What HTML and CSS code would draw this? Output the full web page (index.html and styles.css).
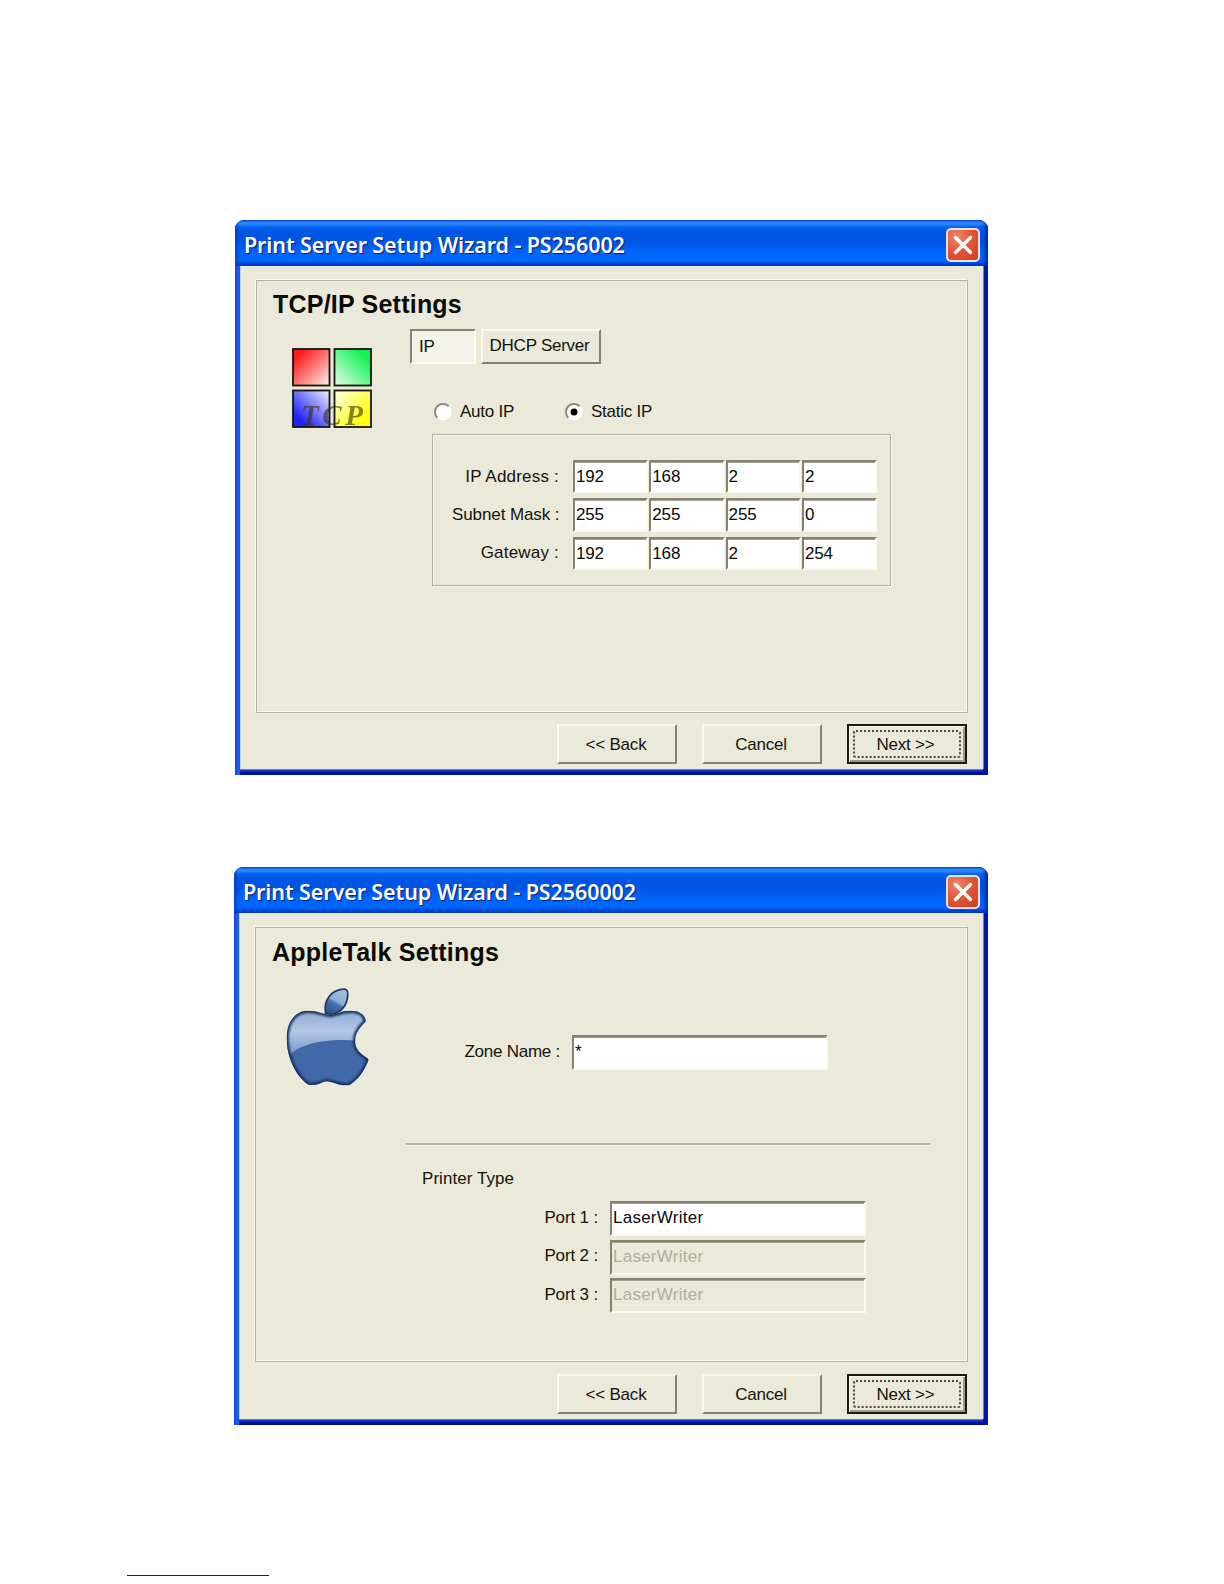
FILE: index.html
```
<!DOCTYPE html>
<html lang="en">

<head>
  <meta charset="UTF-8" />
  <meta name="viewport" content="width=device-width, initial-scale=1.0" />
  <title>Print Server Setup Wizard</title>
  <link rel="stylesheet" href="styles.css">
</head>

<body>
  <div class="window tcp-window">
    <div class="titlebar">
      <span class="title">Print Server Setup Wizard - PS256002</span>
      <div class="close">
        <svg width="20" height="20" viewBox="0 0 20 20"><path d="M2.500 2.500L17.500 17.500M17.500 2.500L2.500 17.500" stroke="#fff" stroke-width="3.400" stroke-linecap="round" /></svg>
      </div>
    </div>
    <div class="content">
      <div class="panel">
        <h2>TCP/IP Settings</h2>
        <div class="columns">
          <svg class="tcp-icon" width="80" height="80" viewBox="0 0 80 80">
            <defs>
              <linearGradient id="red" x1="0" y1="0" x2="1" y2="1"><stop offset=".15" stop-color="#ff1a1a" /><stop offset="1" stop-color="#fff0ec" /></linearGradient>
              <linearGradient id="green" x1="1" y1="0" x2="0" y2="1"><stop offset=".15" stop-color="#0cf050" /><stop offset="1" stop-color="#e4ffe8" /></linearGradient>
              <linearGradient id="blue" x1="0" y1="1" x2="1" y2="0"><stop offset=".2" stop-color="#2222fa" /><stop offset="1" stop-color="#f0f0ff" /></linearGradient>
              <linearGradient id="yellow" x1="1" y1="1" x2="0" y2="0"><stop offset=".25" stop-color="#ffff10" /><stop offset="1" stop-color="#fffff0" /></linearGradient>
            </defs>
            <g stroke="#16160e" stroke-width="1.800">
              <rect x="1" y="1" width="36.500" height="36.500" fill="url(#red)" />
              <rect x="42.500" y="1" width="36.500" height="36.500" fill="url(#green)" />
              <rect x="1" y="42.500" width="36.500" height="36.500" fill="url(#blue)" />
              <rect x="42.500" y="42.500" width="36.500" height="36.500" fill="url(#yellow)" />
            </g>
            <text class="tcp-text" x="9" y="77" textLength="62">TCP</text>
          </svg>
          <div class="settings">
            <div class="tabs">
              <div class="tab active">IP</div>
              <div class="tab">DHCP Server</div>
            </div>
            <div class="radios">
              <div class="radio">
                <svg width="18" height="18" viewBox="0 0 18 18"><circle cx="9" cy="9" r="8.500" fill="#fff" /><path d="M3.300 14.700A8 8 0 0 1 14.700 3.300" fill="none" stroke="#8d8b7e" stroke-width="2" /></svg>
                <span>Auto IP</span>
              </div>
              <div class="radio">
                <svg width="18" height="18" viewBox="0 0 18 18"><circle cx="9" cy="9" r="8.500" fill="#fff" /><path d="M3.300 14.700A8 8 0 0 1 14.700 3.300" fill="none" stroke="#8d8b7e" stroke-width="2" /><circle cx="9" cy="9" r="3.500" fill="#000" /></svg>
                <span>Static IP</span>
              </div>
            </div>
            <div class="ip-box">
              <div class="row">
                <span class="label">IP Address :</span>
                <div class="field">192</div><div class="field">168</div><div class="field">2</div><div class="field">2</div>
              </div>
              <div class="row">
                <span class="label subnet">Subnet Mask :</span>
                <div class="field">255</div><div class="field">255</div><div class="field">255</div><div class="field">0</div>
              </div>
              <div class="row">
                <span class="label">Gateway :</span>
                <div class="field">192</div><div class="field">168</div><div class="field">2</div><div class="field">254</div>
              </div>
            </div>
          </div>
        </div>
      </div>
      <div class="buttons">
        <div class="btn">&lt;&lt; Back</div>
        <div class="btn">Cancel</div>
        <div class="btn default"><span>Next &gt;&gt;</span></div>
      </div>
    </div>
  </div>

  <div class="window apple-window">
    <div class="titlebar">
      <span class="title">Print Server Setup Wizard - PS2560002</span>
      <div class="close">
        <svg width="20" height="20" viewBox="0 0 20 20"><path d="M2.500 2.500L17.500 17.500M17.500 2.500L2.500 17.500" stroke="#fff" stroke-width="3.400" stroke-linecap="round" /></svg>
      </div>
    </div>
    <div class="content">
      <div class="panel">
        <h2>AppleTalk Settings</h2>
        <div class="columns">
          <svg class="apple-icon" width="83" height="98" viewBox="0 0 250 294">
            <defs>
              <linearGradient id="body" x1="0" y1="0" x2="0" y2="1"><stop offset="0" stop-color="#5a7fb8" /><stop offset=".5" stop-color="#4369a8" /><stop offset="1" stop-color="#3f68aa" /></linearGradient>
              <linearGradient id="shine" x1="0" y1="0" x2="0" y2="1"><stop offset="0" stop-color="#8ba9d2" /><stop offset=".45" stop-color="#b3c7e6" /><stop offset="1" stop-color="#6c8fc4" /></linearGradient>
              <linearGradient id="leaf" x1=".8" y1="0" x2=".3" y2="1"><stop offset="0" stop-color="#a9c1e2" /><stop offset=".5" stop-color="#8eacd4" /><stop offset=".6" stop-color="#4a71ac" /><stop offset="1" stop-color="#2e5590" /></linearGradient>
              <filter id="soft" x="-10%" y="-10%" width="120%" height="120%"><feGaussianBlur stdDeviation="4" /></filter>
              <clipPath id="apple"><path d="M134 81C112 79 96 68 66 68C28 68 2 102 2 150C2 208 30 266 68 291C92 295 102 284 122 280C142 280 156 295 190 292C218 276 238 246 249 214C222 196 208 184 208 160C208 134 222 118 240 100C240 84 224 68 196 68C166 68 156 78 134 81Z" /></clipPath>
            </defs>
            <g clip-path="url(#apple)">
              <rect width="250" height="294" fill="url(#body)" />
              <path d="M0 214C30 170 110 150 214 158L245 90L210 60H0Z" fill="url(#shine)" />
              <path class="edge" filter="url(#soft)" d="M134 81C112 79 96 68 66 68C28 68 2 102 2 150C2 208 30 266 68 291C92 295 102 284 122 280C142 280 156 295 190 292C218 276 238 246 249 214C222 196 208 184 208 160C208 134 222 118 240 100C240 84 224 68 196 68C166 68 156 78 134 81Z" />
            </g>
            <path d="M119 75C112 34 138 6 172 3C180 2 186 6 186 16C186 40 176 64 151 75C140 80 130 79 119 75Z" fill="url(#leaf)" stroke="#1d3a66" stroke-width="5" />
          </svg>
          <div class="settings">
            <div class="row zone">
              <span class="label">Zone Name :</span>
              <div class="field">*</div>
            </div>
            <div class="separator"></div>
            <div class="printer-type">Printer Type</div>
            <div class="ports">
              <div class="row">
                <span class="label">Port 1 :</span>
                <div class="field">LaserWriter</div>
              </div>
              <div class="row">
                <span class="label">Port 2 :</span>
                <div class="field disabled">LaserWriter</div>
              </div>
              <div class="row">
                <span class="label">Port 3 :</span>
                <div class="field disabled">LaserWriter</div>
              </div>
            </div>
          </div>
        </div>
      </div>
      <div class="buttons">
        <div class="btn">&lt;&lt; Back</div>
        <div class="btn">Cancel</div>
        <div class="btn default"><span>Next &gt;&gt;</span></div>
      </div>
    </div>
  </div>

  <div class="footer-line"></div>
</body>

</html>
```

FILE: styles.css
```
* {
  box-sizing: border-box;
}

body {
  margin: 0;
  padding-top: 220px;
  height: 1584px;
  overflow: hidden;
  background: white;
  color: #14140c;
  font-family: "Liberation Sans", Arial, sans-serif;
  font-size: 17px;
  line-height: 20px;
  letter-spacing: -0.15px;
  white-space: nowrap;
}

svg {
  display: block;
  flex: none;
}

/* windows */
.window {
  display: flex;
  flex-direction: column;
  width: 753px;
  height: 555px;
  margin-left: 235px;
  border-radius: 9px 9px 0 0;
  background: linear-gradient(90deg, #0a3fd0 0, #1a5ce8 2px, #1a5ce8 5px, #0018a4 6px);
  overflow: hidden;
}

.apple-window {
  width: 754px;
  height: 558px;
  margin-left: 234px;
  margin-top: 92px;
}

.titlebar {
  display: flex;
  justify-content: space-between;
  align-items: flex-start;
  flex: none;
  height: 46px;
  padding: 8px 8px 0 9px;
  background: linear-gradient(#0a50d0 0, #2e8cff 2px, #2a88fc 4px, #0562f0 7px, #0054e4 12px, #0055e5 22px, #0064fb 31px, #0068ff 40px, #0050e0 43px, #0038c0 46px);
  box-shadow: inset -4px 0 4px -1px #0028a8, inset 3px 0 4px -1px #0040c8;
}

.title {
  color: white;
  font-family: "Noto Sans", "Open Sans", sans-serif;
  font-size: 21.500px;
  font-weight: 600;
  line-height: 34px;
  letter-spacing: -0.1px;
  text-shadow: 1px 1px 1px #0a1f80;
}

.close {
  display: flex;
  justify-content: center;
  align-items: center;
  width: 34px;
  height: 34px;
  border: 2px solid #e6e2f6;
  border-radius: 5px;
  background: radial-gradient(circle at 30% 25%, #ec8a70 0, #e0583a 45%, #d23c14 100%);
}

.content {
  flex: 1;
  margin: 0 5px 6px 5px;
  padding: 13px 15px 0 14px;
  background: #ebe9d9;
  border-left: 1px solid #c4d0e4;
  box-shadow: 0 1px 0 #4c84f0, 1px 0 0 #4c84f0, 0 3px 0 #0a34c8, 0 6px 0 #001090;
}

.panel {
  height: 434px;
  padding: 11px 0 0 17px;
  border: 1px solid;
  border-color: #fbfaee #b5b3a4 #b5b3a4 #fbfaee;
  box-shadow: inset 1px 1px 0 #b5b3a4, inset -1px -1px 0 #fbfaee;
}

h2 {
  margin: 0;
  color: #0c0c06;
  font-size: 25px;
  font-weight: bold;
  line-height: 26px;
  letter-spacing: 0.22px;
}

.columns {
  display: flex;
}

.tcp-icon {
  margin: 31px 0 0 19px;
  overflow: visible;
}

.tcp-text {
  font-family: "Liberation Serif", serif;
  font-size: 29px;
  font-style: italic;
  font-weight: bold;
  letter-spacing: 0;
  fill: #32320f;
  opacity: 0.6;
}

.tcp-window .settings {
  padding: 12px 0 0 38px;
}

.tabs {
  display: flex;
  gap: 5px;
}

.tab,
.btn {
  display: flex;
  justify-content: center;
  align-items: center;
  border: 2px solid;
  border-color: #fbf9ea #85836f #85836f #fbf9ea;
}

.tab {
  width: 120px;
  height: 35px;
  padding: 0 3px 2px 0;
  letter-spacing: -0.25px;
}

.tab.active {
  width: 66px;
  justify-content: flex-start;
  padding: 1px 0 0 7px;
  background: #f3f2ea;
  border-color: #85836f #fdfcf2 #fdfcf2 #85836f;
}

.radios {
  display: flex;
  margin: 38px 0 0 24px;
}

.radio {
  display: flex;
  align-items: center;
  width: 131px;
  gap: 8px;
  letter-spacing: -0.25px;
}

.ip-box {
  display: flex;
  flex-direction: column;
  gap: 5px;
  width: 459px;
  height: 152px;
  margin: 12px 0 0 22px;
  padding: 25px 0 0 19px;
  border: 1px solid #b0ae9f;
  box-shadow: inset 1px 1px 0 #faf9ee, 1px 1px 0 #faf9ee;
}

.row {
  display: flex;
  align-items: center;
}

.label {
  width: 107px;
  margin-right: 14px;
  text-align: right;
}

.ip-box .label {
  letter-spacing: 0.2px;
}

.ip-box .label.subnet {
  letter-spacing: -0.1px;
}

.field {
  width: 75.300px;
  height: 33.300px;
  margin-right: 1px;
  padding: 5px 0 0 1px;
  color: #080808;
  background: white;
  border: 2px solid;
  border-color: #85836f #fbfaf0 #fbfaf0 #85836f;
  box-shadow: inset 0 1px 0 #a3a192;
}

.field.disabled {
  color: #b0ae9c;
  background: #ebe9d9;
}

.buttons {
  display: flex;
  justify-content: flex-end;
  gap: 25px;
  padding: 11px 1px 0 0;
}

.btn {
  width: 120px;
  height: 40px;
  padding: 2px 2px 0 0;
  letter-spacing: -0.2px;
}

.btn.default {
  padding: 3px;
  border-color: #1c1b12;
  box-shadow: inset 1px 1px 0 #fbf9ea, inset -2px -2px 0 #9c9a88;
}

.btn.default span {
  width: 108px;
  height: 28px;
  padding-right: 3px;
  border: 2px dotted #4a493c;
  border-radius: 3px;
  line-height: 25px;
  text-align: center;
}

/* AppleTalk window */
.apple-window .panel {
  height: 436px;
  padding-top: 12px;
}

.apple-window .buttons {
  padding-top: 12px;
}

.apple-icon {
  margin: 23px 0 0 14px;
}

.edge {
  fill: none;
  stroke: #17335f;
  stroke-width: 13;
}

.apple-window .settings {
  padding: 70px 0 0 36px;
}

.apple-window .label {
  margin: -2px 12px 0 1px;
}

.apple-window .field {
  width: 256px;
  height: 35px;
}

.zone {
  margin-left: 47px;
  letter-spacing: -0.25px;
}

.separator {
  width: 526px;
  margin-top: 73px;
  border-top: 2px solid #b8b6a8;
  border-bottom: 1px solid #f7f6ea;
}

.printer-type {
  margin: 23px 0 0 17px;
  letter-spacing: 0.05px;
}

.ports {
  display: flex;
  flex-direction: column;
  gap: 3.500px;
  margin: 12px 0 0 85px;
}

.ports .field {
  letter-spacing: 0.25px;
}

.footer-line {
  width: 142px;
  height: 1px;
  margin: 150px 0 0 127px;
  background: #14148c;
}
```
